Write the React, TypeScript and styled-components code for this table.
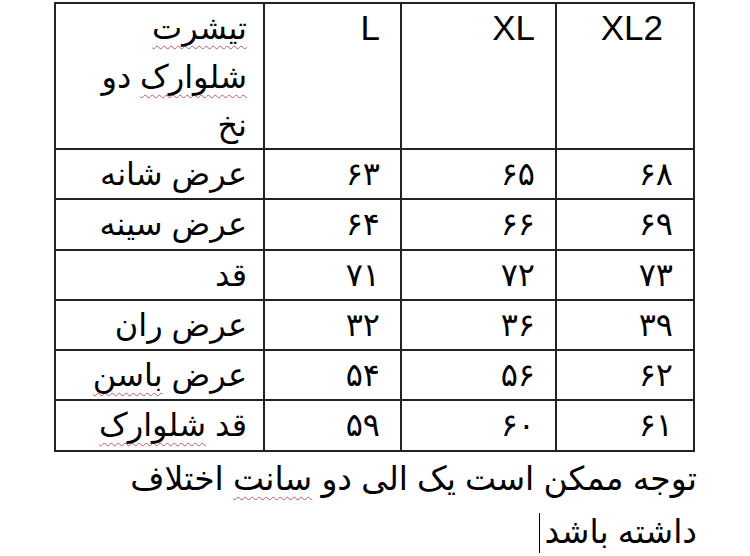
import styled, { createGlobalStyle } from 'styled-components';

const GlobalStyle = createGlobalStyle`
  html, body {
    margin: 0;
    padding: 0;
    background: #ffffff;
  }
  body {
    font-family: "Liberation Sans", "DejaVu Sans", sans-serif;
    color: #000000;
  }
`;

const Page = styled.div`
  width: 750px;
  height: 556px;
  overflow: hidden;
  padding: 2px 0 0 54px;
  box-sizing: border-box;
`;

const SizeTable = styled.div`
  display: grid;
  grid-template-columns: 209px 137px 155px 138px;
  grid-template-rows: 146px repeat(6, 50.3px);
  width: max-content;
  border-top: 2px solid #222;
  border-left: 2px solid #222;
`;

const Cell = styled.div<{ $head?: boolean; $latin?: boolean; $pad?: number }>`
  box-sizing: border-box;
  border-right: 2px solid #222;
  border-bottom: 2px solid #222;
  direction: rtl;
  text-align: right;
  font-size: ${(p) => (p.$latin ? '35px' : '32px')};
  line-height: ${(p) => (p.$head ? '48.5px' : '48px')};
  padding: ${(p) => (p.$latin ? '0' : '0')} ${(p) => p.$pad ?? 20}px 0 4px;
  white-space: nowrap;
  overflow: hidden;
`;

const Digits = styled.span`
  letter-spacing: 4px;
`;

const Misspelled = styled.span`
  text-decoration-line: underline;
  text-decoration-style: wavy;
  text-decoration-color: #c25a6a;
  text-decoration-thickness: 1px;
  text-underline-offset: 6px;
  text-decoration-skip-ink: none;
`;

const Note = styled.p`
  margin: 0;
  width: 643px;
  direction: rtl;
  text-align: right;
  font-size: 33px;
  line-height: 53px;
`;

const Caret = styled.span`
  display: inline-block;
  width: 0;
  height: 40px;
  border-left: 1.5px solid #000;
  margin-right: 4px;
  vertical-align: -10px;
`;

const rows: [React.ReactNode, string, string, string][] = [
  ['عرض شانه', '۶۳', '۶۵', '۶۸'],
  ['عرض سینه', '۶۴', '۶۶', '۶۹'],
  ['قد', '۷۱', '۷۲', '۷۳'],
  ['عرض ران', '۳۲', '۳۶', '۳۹'],
  [
    <>
      عرض <Misspelled>باسن</Misspelled>
    </>,
    '۵۴',
    '۵۶',
    '۶۲',
  ],
  [
    <>
      قد <Misspelled>شلوارک</Misspelled>
    </>,
    '۵۹',
    '۶۰',
    '۶۱',
  ],
];

function App() {
  return (
    <Page>
      <GlobalStyle />
      <SizeTable>
        <Cell $head $pad={16}>
          <Misspelled>تیشرت</Misspelled>
          <br />
          <Misspelled>شلوارک</Misspelled> دو
          <br />
          نخ
        </Cell>
        <Cell $head $latin>
          L
        </Cell>
        <Cell $head $latin>
          XL
        </Cell>
        <Cell $head $latin $pad={30}>
          XL2
        </Cell>
        {rows.map((r, i) => (
          <>
            <Cell key={`l${i}`} $pad={16}>
              {r[0]}
            </Cell>
            <Cell key={`a${i}`}>
              <Digits>{r[1]}</Digits>
            </Cell>
            <Cell key={`b${i}`}>
              <Digits>{r[2]}</Digits>
            </Cell>
            <Cell key={`c${i}`}>
              <Digits>{r[3]}</Digits>
            </Cell>
          </>
        ))}
      </SizeTable>
      <Note>
        توجه ممکن است یک الی دو <Misspelled>سانت</Misspelled> اختلاف
        <br />
        داشته باشد
        <Caret />
      </Note>
    </Page>
  );
}

export default App;
